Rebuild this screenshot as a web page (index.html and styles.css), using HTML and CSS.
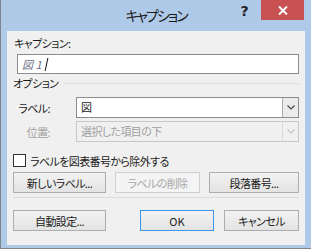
FILE: index.html
```html
<!DOCTYPE html>
<html lang="ja">
<head>
    <meta charset="UTF-8">
    <meta name="viewport" content="width=device-width, initial-scale=1.0">
    <title>キャプション</title>
    <link rel="stylesheet" href="styles.css">
</head>
<body>
<div class="window">
    <div class="titlebar">
        <span class="title">キャプション</span>
        <div class="controls">
            <span class="help">?</span>
            <span class="close">
                <svg width="10" height="9" viewBox="0 0 10 9">
                    <path d="M1 0.5 L9 8.5 M9 0.5 L1 8.5" stroke="#fff" stroke-width="2"/>
                </svg>
            </span>
        </div>
    </div>
    <div class="client">
        <div class="caption-label">キャプション:</div>
        <div class="textbox"><span class="textbox-value">図 1</span><span class="caret"></span></div>

        <div class="group-head"><span>オプション</span><span class="rule"></span></div>

        <div class="opt-row">
            <span class="opt-label">ラベル:</span>
            <div class="combo">
                <span class="combo-value">図</span>
                <span class="combo-btn">
                    <svg width="8" height="5" viewBox="0 0 8 5"><path d="M0.5 0.5 L4 4 L7.5 0.5" fill="none" stroke="#444" stroke-width="1.2"/></svg>
                </span>
            </div>
        </div>
        <div class="opt-row disabled">
            <span class="opt-label">位置:</span>
            <div class="combo">
                <span class="combo-value">選択した項目の下</span>
                <span class="combo-btn">
                    <svg width="8" height="5" viewBox="0 0 8 5"><path d="M0.5 0.5 L4 4 L7.5 0.5" fill="none" stroke="#c4c4c4" stroke-width="1.2"/></svg>
                </span>
            </div>
        </div>

        <label class="check"><span class="check-box"></span>ラベルを図表番号から除外する</label>

        <div class="btn-row">
            <button class="btn">新しいラベル...</button>
            <button class="btn" disabled>ラベルの削除</button>
            <button class="btn">段落番号...</button>
        </div>

        <div class="sep"></div>

        <div class="btn-row bottom">
            <button class="btn">自動設定...</button>
            <button class="btn default">OK</button>
            <button class="btn">キャンセル</button>
        </div>
    </div>
</div>
</body>
</html>
```

FILE: styles.css
```css
body {
    margin: 0;
    font-family: "Noto Sans CJK JP", "Noto Sans", sans-serif;
    font-size: 11px;
    letter-spacing: -0.6px;
    font-feature-settings: "palt";
    color: #1b1b1b;
}
.window {
    width: 311px;
    height: 249px;
    box-sizing: border-box;
    background-color: #afc9e8;
    border-left: 1px solid #7d848c;
    border-bottom: 1px solid #7d848c;
    padding: 0 6px 3px 6px;
    display: flex;
    flex-direction: column;
}
.titlebar {
    position: relative;
    height: 31px;
    margin: 0 -6px;
    text-align: center;
}
.title {
    display: inline-block;
    font-size: 14px;
    letter-spacing: -2px;
    line-height: 30px;
    color: #1a1a1a;
}
.controls {
    position: absolute;
    top: 0;
    right: 7px;
    display: flex;
}
.help {
    width: 33px;
    line-height: 22px;
    font-family: "DejaVu Sans", sans-serif;
    font-size: 14px;
    font-weight: bold;
    letter-spacing: 0;
    color: #222;
    text-align: center;
}
.close {
    width: 43px;
    height: 20px;
    background-color: #c75050;
    display: flex;
    align-items: center;
    justify-content: center;
}
.client {
    flex: 1;
    background-color: #f0f0f0;
    padding: 0 6px;
    display: flex;
    flex-direction: column;
}
.caption-label {
    margin: 5px 0 0 1px;
    line-height: 15px;
}
.textbox {
    margin: 3px 0 0 4px;
    height: 20px;
    box-sizing: border-box;
    border: 1px solid #8c8c8c;
    background-color: #fff;
    padding-left: 4px;
    display: flex;
    align-items: center;
}
.textbox-value {
    font-style: italic;
    color: #6e6e88;
    letter-spacing: 0;
}
.caret {
    width: 1px;
    height: 13px;
    margin-left: 4px;
    background-color: #111;
    transform: skewX(-12deg);
}
.group-head {
    margin-top: 2px;
    height: 15px;
    line-height: 15px;
    display: flex;
    align-items: center;
    gap: 6px;
}
.rule {
    flex: 1;
    height: 1px;
    background-color: #dcdcdc;
}
.opt-row {
    margin-top: 6px;
    display: grid;
    grid-template-columns: 50px 1fr;
    column-gap: 13px;
    align-items: center;
}
.opt-row + .opt-row {
    margin-top: 3px;
}
.opt-label {
    text-align: right;
    white-space: nowrap;
    padding-right: 13px;
}
.combo {
    height: 21px;
    box-sizing: border-box;
    border: 1px solid #8c8c8c;
    background-color: #fff;
    display: flex;
}
.combo-value {
    flex: 1;
    padding-left: 4px;
    line-height: 19px;
}
.combo-btn {
    width: 15px;
    border-left: 1px solid #acacac;
    background-color: #ececec;
    display: flex;
    align-items: center;
    justify-content: center;
}
.disabled .opt-label,
.disabled .combo-value {
    color: #a0a0a0;
}
.disabled .combo {
    border-color: #c8c8c8;
    background-color: #f0f0f0;
}
.disabled .combo-btn {
    border-left-color: #dadada;
    background-color: #f0f0f0;
}
.check {
    margin-top: 12px;
    height: 13px;
    display: flex;
    align-items: center;
    gap: 4px;
}
.check-box {
    width: 13px;
    height: 13px;
    box-sizing: border-box;
    border: 1px solid #333;
    background-color: #fff;
}
.btn-row {
    margin-top: 5px;
    display: grid;
    grid-template-columns: 93px 85px 90px;
    justify-content: space-between;
}
.btn-row.bottom {
    margin-top: 12px;
    display: flex;
    gap: 10px;
}
.btn-row.bottom .btn:first-child {
    width: 93px;
    margin-right: auto;
}
.btn-row.bottom .btn {
    width: 75px;
}
.btn-row.bottom .default {
    width: 74px;
}
.btn {
    height: 21px;
    padding: 0;
    font-family: inherit;
    font-size: 11px;
    letter-spacing: -0.6px;
    font-feature-settings: "palt";
    color: #1b1b1b;
    border: 1px solid #adadad;
    background: linear-gradient(#f2f2f2, #e3e3e3);
}
.btn:disabled {
    color: #a6a6a6;
    border-color: #cfcfcf;
    background: #f4f4f4;
}
.btn.default {
    border-color: #3c95e6;
    letter-spacing: 0;
}
.sep {
    margin-top: 4px;
    height: 1px;
    background-color: #dcdcdc;
}
```
